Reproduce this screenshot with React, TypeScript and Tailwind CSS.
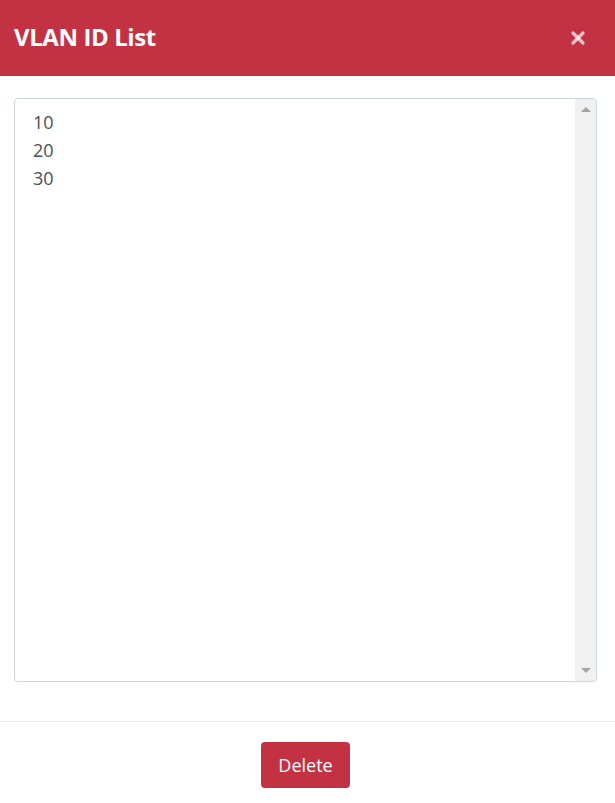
import { X } from 'lucide-react';

const ids = ['10', '20', '30'];

export default function App() {
  return (
    <div className="w-[615px] h-[803px] bg-white flex flex-col" style={{ fontFamily: '"Open Sans", "Noto Sans", sans-serif' }}>
      {/* Header */}
      <div className="h-[76px] shrink-0 bg-[#c23243] flex items-center justify-between pl-[14px] pr-[27px]">
        <h1 className="text-[24px] font-bold text-white tracking-[-0.4px] leading-none pb-[2px]">VLAN ID List</h1>
        <button className="text-white/70 flex items-center">
          <X size={20} strokeWidth={4} />
        </button>
      </div>

      {/* Body */}
      <div className="pl-[14px] pr-[18px] pt-[22px] pb-[39px] border-b border-[#e9ecef]">
        <div className="h-[584px] border border-[#ced4da] rounded-[4px] flex overflow-hidden">
          <div className="flex-1 pl-[18px] pt-[9px] text-[18px] leading-[28px] text-[#495057]">
            {ids.map((id) => (
              <div key={id}>{id}</div>
            ))}
          </div>
          <div className="w-[21px] bg-[#f1f1f1] flex flex-col items-center justify-between py-[8px]">
            <div className="w-0 h-0 border-l-[5px] border-r-[5px] border-b-[5px] border-l-transparent border-r-transparent border-b-[#a3a3a3]" />
            <div className="w-0 h-0 border-l-[5px] border-r-[5px] border-t-[5px] border-l-transparent border-r-transparent border-t-[#a3a3a3]" />
          </div>
        </div>
      </div>

      {/* Footer */}
      <div className="flex justify-center pt-[20px] pr-[4px]">
        <button className="h-[46px] px-[17px] rounded-[4px] bg-[#c23243] text-white text-[18px]">Delete</button>
      </div>
    </div>
  );
}
